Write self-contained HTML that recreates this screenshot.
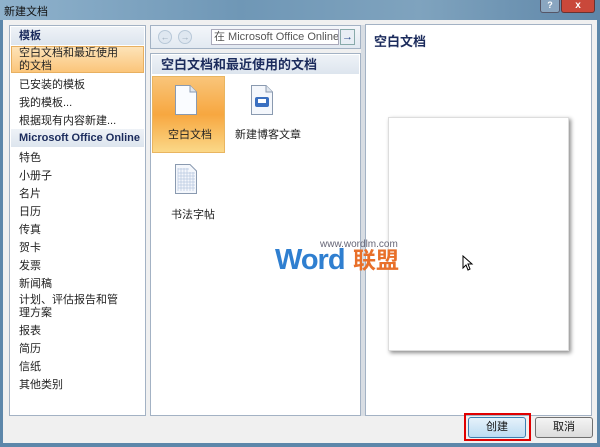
<!DOCTYPE html>
<html><head><meta charset="utf-8"><style>
*{margin:0;padding:0;box-sizing:border-box}
body{width:600px;height:447px;overflow:hidden;position:relative;background:#f0f0f0;font-family:"Liberation Sans","Noto Sans CJK SC",sans-serif;font-size:12px;color:#1e2a4a}
.title{position:absolute;left:0;top:0;width:600px;height:20px;background:linear-gradient(90deg,#8fb2cc 0%,#6f97b6 40%,#7fa3be 70%,#5e86a8 100%)}
.title span{position:absolute;left:4px;top:3px;font-size:11px;color:#111}
.frame{position:absolute;background:#5d87aa}
.p{position:absolute;background:#fff;border:1px solid #a3b2c4}
.hd{position:absolute;left:1px;right:1px;background:linear-gradient(#eef2f7,#dde5ee);font-weight:bold;color:#1b2b5c}
.it{position:absolute;left:9px;font-size:11px;color:#222;line-height:14px}
.btn{position:absolute;top:417px;width:58px;height:21px;border:1px solid #707070;border-radius:3px;font-size:11px;text-align:center;line-height:19px;color:#111}
</style></head><body>
<div class="title"><span>新建文档</span>
<div style="position:absolute;left:540px;top:0;width:20px;height:13px;border:1px solid #556;border-top:none;border-radius:0 0 3px 3px;background:#8aa6c0;color:#fff;font-size:9px;text-align:center;font-weight:bold">?</div>
<div style="position:absolute;left:561px;top:0;width:34px;height:13px;border:1px solid #633;border-top:none;border-radius:0 0 3px 3px;background:#c9483a;color:#fff;font-size:10px;text-align:center;font-weight:bold;line-height:12px">x</div></div>
<div class="frame" style="left:0;top:20px;width:3px;height:427px"></div>
<div class="frame" style="left:597px;top:20px;width:3px;height:427px"></div>
<div class="frame" style="left:0;top:443px;width:600px;height:4px"></div>

<div class="p" style="left:9px;top:25px;width:137px;height:391px">
<div class="hd" style="top:1px;height:18px;padding-left:8px;font-size:11px;line-height:18px">模板</div>
<div style="position:absolute;left:1px;right:1px;top:20px;height:27px;background:linear-gradient(#fde3b8,#fbc57a);border:1px solid #e8b060"></div>
<div class="it" style="top:20px;line-height:13px;padding-top:1px">空白文档和最近使用<br>的文档</div>
<div class="it" style="top:52px">已安装的模板</div>
<div class="it" style="top:70px">我的模板...</div>
<div class="it" style="top:88px">根据现有内容新建...</div>
<div class="hd" style="top:103px;height:18px;padding-left:8px;font-size:11px;line-height:18px">Microsoft Office Online</div>
<div class="it" style="top:125px">特色</div>
<div class="it" style="top:143px">小册子</div>
<div class="it" style="top:161px">名片</div>
<div class="it" style="top:179px">日历</div>
<div class="it" style="top:197px">传真</div>
<div class="it" style="top:215px">贺卡</div>
<div class="it" style="top:233px">发票</div>
<div class="it" style="top:251px">新闻稿</div>
<div class="it" style="top:268px;line-height:13px">计划、评估报告和管<br>理方案</div>
<div class="it" style="top:298px">报表</div>
<div class="it" style="top:316px">简历</div>
<div class="it" style="top:334px">信纸</div>
<div class="it" style="top:352px">其他类别</div>
</div>

<div class="p" style="left:150px;top:25px;width:211px;height:24px;background:linear-gradient(#f3f6fa,#e2e9f1)">
<div style="position:absolute;left:7px;top:4px;width:14px;height:14px;border-radius:50%;background:#dfe7f0;border:1px solid #b8c8d8;color:#9ab;font-size:9px;text-align:center;line-height:12px">←</div>
<div style="position:absolute;left:27px;top:4px;width:14px;height:14px;border-radius:50%;background:#dfe7f0;border:1px solid #b8c8d8;color:#9ab;font-size:9px;text-align:center;line-height:12px">→</div>
<div style="position:absolute;left:60px;top:3px;width:128px;height:16px;background:#fff;border:1px solid #aab;font-size:11px;color:#555;padding-left:2px;line-height:14px;overflow:hidden;white-space:nowrap">在 Microsoft Office Online 上</div>
<div style="position:absolute;left:189px;top:3px;width:15px;height:16px;background:#e8eef5;border:1px solid #8aa;color:#2a4a8a;font-size:11px;text-align:center;line-height:14px;font-weight:bold">→</div>
</div>
<div class="p" style="left:150px;top:53px;width:211px;height:363px">
<div class="hd" style="top:1px;height:19px;padding-left:9px;font-size:13px;line-height:19px">空白文档和最近使用的文档</div>
<div style="position:absolute;left:1px;top:22px;width:73px;height:77px;background:linear-gradient(#f9c57a,#f7a740 50%,#fbd888);border:1px solid #e9b560"></div>
<svg style="position:absolute;left:24px;top:31px" width="22" height="30"><path d="M0.5 0.5H15L21.5 7V29.5H0.5Z" fill="#fafcff" stroke="#8a9ab0"/><path d="M15 0.5V7H21.5" fill="#e0e6ee" stroke="#8a9ab0"/></svg>
<div style="position:absolute;left:17px;top:72px;font-size:11px;color:#222">空白文档</div>
<svg style="position:absolute;left:100px;top:31px" width="22" height="30"><path d="M0.5 0.5H15L21.5 7V29.5H0.5Z" fill="#f4f7fc" stroke="#8a9ab0"/><path d="M15 0.5V7H21.5" fill="#e0e6ee" stroke="#8a9ab0"/><rect x="4" y="12" width="14" height="10" rx="2" fill="#3a6fc0"/><rect x="7" y="14" width="8" height="4" fill="#fff"/></svg>
<div style="position:absolute;left:84px;top:72px;font-size:11px;color:#222">新建博客文章</div>
<svg style="position:absolute;left:24px;top:110px" width="22" height="30"><path d="M0.5 0.5H15L21.5 7V29.5H0.5Z" fill="#f4f7fc" stroke="#8a9ab0"/><g stroke="#b8c8e0" stroke-width=".7"><path d="M3 4V27M6 4V27M9 4V27M12 4V27M15 8V27M18 8V27M3 5H14M3 9H20M3 12H20M3 15H20M3 18H20M3 21H20M3 24H20"/></g></svg>
<div style="position:absolute;left:20px;top:152px;font-size:11px;color:#222">书法字帖</div>
</div>
<div style="position:absolute;left:361px;top:25px;width:4px;height:391px;background:#d8dde3"></div>

<div class="p" style="left:365px;top:24px;width:227px;height:392px">
<div style="position:absolute;left:8px;top:6px;font-size:13px;font-weight:bold;color:#1b2b5c">空白文档</div>
<div style="position:absolute;left:22px;top:92px;width:181px;height:234px;background:#fff;box-shadow:2px 2px 4px rgba(0,0,0,.45);border:1px solid #ddd"></div>
<svg style="position:absolute;left:96px;top:230px" width="12" height="16"><path d="M1 1V13L4 10L6 15L8 14L6 9H10Z" fill="#fff" stroke="#000"/></svg>
</div>

<div style="position:absolute;left:320px;top:239px;font-size:10px;color:#667;line-height:12px">www.wordlm.com</div>
<div style="position:absolute;left:275px;top:244px;font-size:29px;font-weight:bold;color:#2f7fd0;letter-spacing:-1px;line-height:32px">Word</div>
<div style="position:absolute;left:353px;top:246px;font-size:23px;font-weight:bold;color:#e8702a;line-height:28px">联盟</div>

<div style="position:absolute;left:464px;top:413px;width:67px;height:28px;border:2px solid #e00000"></div>
<div class="btn" style="left:468px;background:linear-gradient(#e6f2fb,#bcdcf2);border-color:#3c7fb1">创建</div>
<div class="btn" style="left:535px;background:linear-gradient(#f4f4f4,#dcdcdc)">取消</div>
</body></html>
